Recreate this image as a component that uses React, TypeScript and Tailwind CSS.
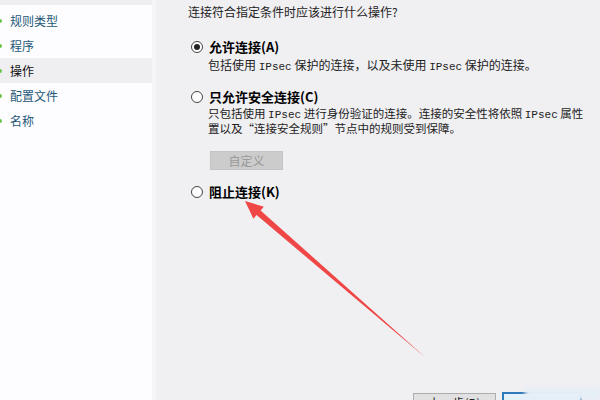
import React from "react";

const navItems = [
  { label: "规则类型", active: false },
  { label: "程序", active: false },
  { label: "操作", active: true },
  { label: "配置文件", active: false },
  { label: "名称", active: false },
];

const Radio: React.FC<{ checked?: boolean }> = ({ checked }) => (
  <span className="flex h-[12px] w-[12px] shrink-0 items-center justify-center rounded-full border border-[#444] bg-white">
    {checked && <span className="h-[6px] w-[6px] rounded-full bg-[#222]" />}
  </span>
);

const mono = { fontFamily: '"Liberation Mono", monospace' };

const App: React.FC = () => {
  const font = { fontFamily: '"Noto Sans CJK SC", "Noto Sans", sans-serif' };
  return (
    <div
      className="relative flex h-[400px] w-[600px] overflow-hidden bg-[#f0eff2] text-[12px]"
      style={font}
    >
      {/* sidebar */}
      <div className="flex w-[156px] shrink-0 flex-col bg-[#fdfcfe] border-r-[4px] border-[#f6f4f7]">
        <div className="h-[5px] bg-[#efeef1]" />
        <div className="mt-[3px] flex flex-col">
          {navItems.map((item) => (
            <div
              key={item.label}
              className={`flex h-[25px] items-center ${item.active ? "bg-[#efeef1]" : ""}`}
            >
              <span className="ml-[-2px] h-[4px] w-[4px] rounded-full bg-[#6cc24a]" />
              <span
                className={`ml-[8px] leading-none ${item.active ? "text-[#111]" : "text-[#1d5878]"}`}
              >
                {item.label}
              </span>
            </div>
          ))}
        </div>
      </div>

      {/* main */}
      <div className="flex flex-1 flex-col pl-[32px] pt-[4px] text-[#222]">
        <div className="leading-[16px]">连接符合指定条件时应该进行什么操作?</div>

        <div className="mt-[19px] flex items-center gap-[6px] pl-[3px]">
          <Radio checked />
          <span className="text-[13px] font-bold leading-[16px] text-black">允许连接(A)</span>
        </div>
        <div className="ml-[20px] mt-[3px] whitespace-nowrap leading-[14px]">
          包括使用 <span style={mono} className="text-[11px]">IPsec</span> 保护的连接，以及未使用{" "}
          <span style={mono} className="text-[11px]">IPsec</span> 保护的连接。
        </div>

        <div className="mt-[15px] flex items-center gap-[6px] pl-[3px]">
          <Radio />
          <span className="text-[13px] font-bold leading-[16px] text-black">只允许安全连接(C)</span>
        </div>
        <div className="ml-[20px] mt-[2px] whitespace-nowrap text-[11.5px] leading-[13px]">
          <div>
            只包括使用 <span style={mono} className="text-[11px]">IPsec</span> 进行身份验证的连接。连接的安全性将依照{" "}
            <span style={mono} className="text-[11px]">IPsec</span> 属性
          </div>
          <div>置以及“连接安全规则”节点中的规则受到保障。</div>
        </div>

        <button className="ml-[22px] mt-[16px] flex h-[19px] w-[73px] items-center justify-center border border-[#c4c4c4] bg-[#cccccc] text-[12px] leading-none text-[#999]">
          自定义
        </button>

        <div className="mt-[14px] flex items-center gap-[6px] pl-[3px]">
          <Radio />
          <span className="text-[13px] font-bold leading-[16px] text-black">阻止连接(K)</span>
        </div>

        <div className="flex-1" />
        <div className="mb-[-15px] flex items-start gap-[6px] pl-[225px]">
          <div className="mt-[1px] h-[22px] w-[83px] border border-[#adadad] bg-[#e1e1e1] pt-[3px] text-center leading-none">
            上一步(B)
          </div>
          <div className="h-[22px] w-[80px] border-2 border-[#2f7ab8] bg-[#e5f1fb]" />
        </div>
      </div>

      {/* watermark blur */}
      <div className="absolute bottom-0 right-0 h-[12px] w-[75px] bg-[#e6eef6] blur-[2px]" />

      {/* annotation arrow */}
      <svg className="pointer-events-none absolute left-0 top-0" width="600" height="400">
        <polygon
          points="245,201 263.8,206.7 260.6,210.5 426,358 256.6,215.1 253.4,218.8"
          fill="#ef4646"
        />
      </svg>
    </div>
  );
};

export default App;
